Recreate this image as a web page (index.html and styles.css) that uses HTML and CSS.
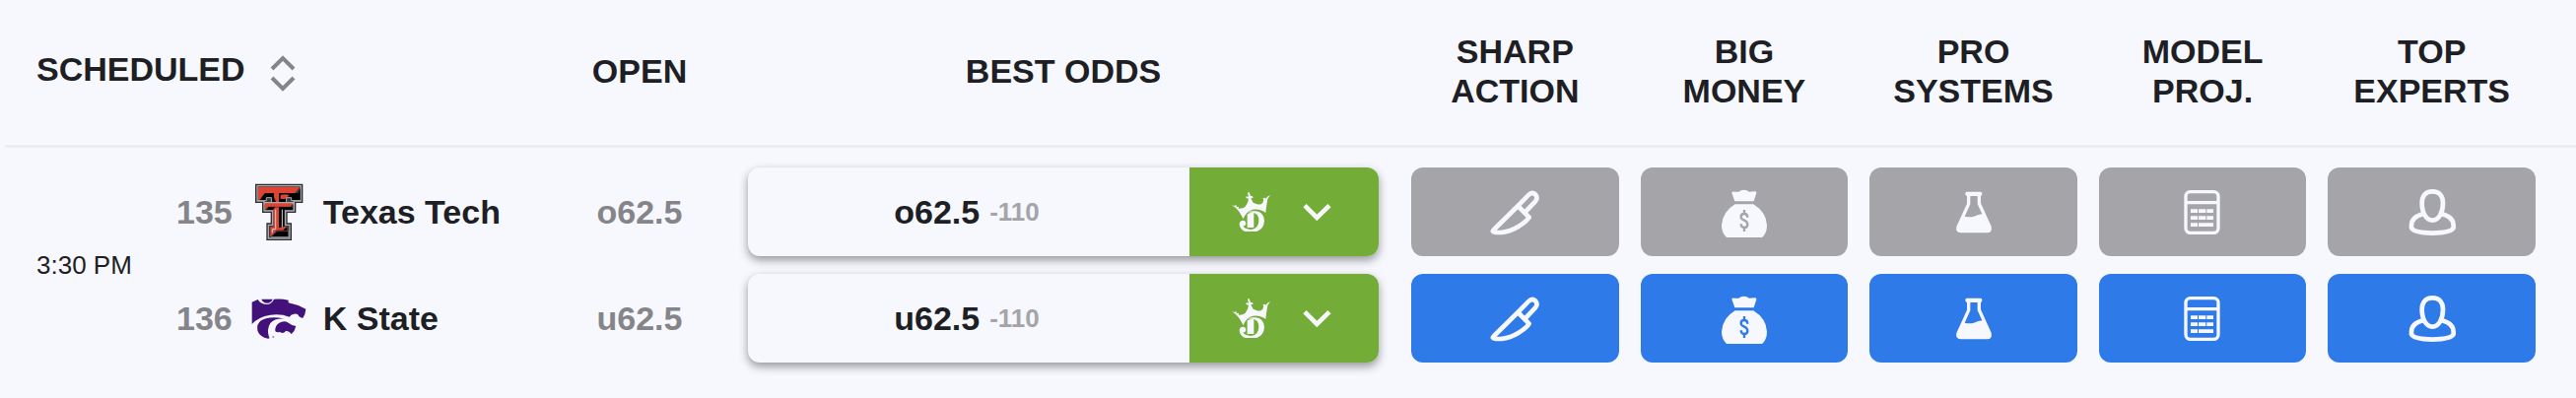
FILE: index.html
```html
<!DOCTYPE html>
<html lang="en">
<head>
<meta charset="utf-8">
<meta name="viewport" content="width=device-width, initial-scale=1">
<title>Best Odds</title>
<link rel="stylesheet" href="styles.css">
</head>
<body>
<svg class="sprite" aria-hidden="true">
  <symbol id="knife" viewBox="51 15 180 180">
    <path class="line" d="M152 86 L183 54 Q194 43 204 52 Q213 62 204 73 L175 104 M151 87 L185 122 Q178 134 152 150 Q126 166 98 168 L84 168 Q69 166 78 159 Z"/>
  </symbol>
  <symbol id="bag" viewBox="59 15 180 180">
    <path class="solid" d="M111 47 Q112 43 118 44 L132 44 Q139 38 148 38 Q157 38 164 44 L180 43 Q187 43 186 48 L178 73 L120 73 Z"/>
    <path class="solid" d="M121 82 L177 82 Q216 106 218 146 Q218 170 203 183 L95 183 Q80 168 80 146 Q83 104 121 82 Z"/>
    <path class="cut" d="M159 122 Q159 111 149 111 Q139 111 139 120 Q139 127 149 131 Q159 135 159 144 Q159 153 149 153 Q139 153 139 142 M149 99 V111 M149 153 V165"/>
  </symbol>
  <symbol id="flask" viewBox="66 15 180 180">
    <path class="solid" fill-rule="evenodd" d="M134 44 H177 Q181 44 181 50 Q181 56 177 57 V79 L209 149 Q213 168 196 169 H116 Q99 168 103 150 L135 80 V57 Q130 56 130 50 Q130 44 134 44 Z M145 57 V82 L128 119 Q141 123 156 119 Q170 113 181 112 L167 81 V57 Z"/>
  </symbol>
  <symbol id="calc" viewBox="765 15 180 180">
    <rect class="line calc-line" x="804" y="44" width="99" height="125" rx="14"/>
    <path class="line calc-line" d="M804 77 H903"/>
    <path class="solid" d="M819 97h21v11h-21z M843 97h22v11h-22z M868 97h20v11h-20z M819 118h21v11h-21z M843 118h22v11h-22z M868 118h20v11h-20z M819 139h21v11h-21z M843 139h45v11h-45z"/>
  </symbol>
  <symbol id="person" viewBox="52 15 180 180">
    <path class="line person-line" d="M143 43 C121 43 111 58 111 78 C111 107 123 131 143 131 C163 131 175 107 175 78 C175 58 165 43 143 43 Z"/>
    <path class="line person-line" d="M114 112 Q79 121 79 147 V154 Q86 169 143 170 Q200 169 207 154 V147 Q207 121 172 112"/>
  </symbol>
  <symbol id="crown" viewBox="150 105 120 120">
    <path class="solid" d="M188 187 L176 166 L165 153 L153 145 L162 147 L166 143 L168 151 L175 149 L173 155 Q187 156 194 149 L201 137 L204 125 L196 123 L197 118 L204 119 L201 107 L206 105 L210 117 L216 117 L218 122 L211 124 L218 137 L230 142 Q241 145 247 137 L250 128 L247 124 L253 122 L257 125 L261 119 L270 114 L262 126 L258 151 L256 168 Q240 155 217 158 Q196 163 188 187 Z"/>
    <path class="solid" d="M200 172 Q205 168 220 167 V213 H200 Z"/>
    <path class="solid" fill-rule="evenodd" d="M202 166 Q212 161 226 163 Q252 167 252 193 Q250 226 212 228 Q179 227 176 203 Q177 191 187 191 Q196 192 196 202 Q194 210 187 208 Q191 218 211 219 Q235 216 235 191 Q235 169 215 167 Q208 167 202 166 Z"/>
  </symbol>
  <symbol id="chevron" viewBox="357 105 120 120">
    <path class="line chevron-line" d="M378 146 L415 183 L453 146"/>
  </symbol>
</svg>

<main class="board">
<table class="odds">
  <colgroup>
    <col class="col-time"><col class="col-team"><col class="col-open"><col class="col-best">
    <col><col><col><col><col>
    <col class="col-end">
  </colgroup>
  <thead>
    <tr>
      <th colspan="2" scope="colgroup" class="scheduled">
        <button type="button" class="sort">Scheduled
          <svg class="sort-icon" viewBox="0 0 28 44" aria-hidden="true"><path d="M3 20 L14 9 L25 20 M3 29 L14 40 L25 29"/></svg>
        </button>
      </th>
      <th scope="col">Open</th>
      <th scope="col">Best Odds</th>
      <th scope="col">Sharp<br>Action</th>
      <th scope="col">Big<br>Money</th>
      <th scope="col">Pro<br>Systems</th>
      <th scope="col">Model<br>Proj.</th>
      <th scope="col">Top<br>Experts</th>
      <td></td>
    </tr>
  </thead>
  <tbody>
    <tr class="away">
      <td rowspan="2" class="time">3:30 PM</td>
      <td class="team-cell">
        <div class="team">
          <span class="number">135</span>
          <svg class="logo" viewBox="36 45 180 180" aria-hidden="true">
            <path fill="#2c2c30" d="M57 50 H202 V108 H181 V138 H155 V169 H168 V222 H91 V169 H104 V138 H78 V108 H57 Z"/>
            <path fill="#a9abae" d="M61 54 H198 V104 H177 V134 H151 V173 H164 V218 H95 V173 H108 V134 H82 V104 H61 Z"/>
            <path fill="#39393d" d="M65 58 H194 V100 H173 V130 H147 V177 H160 V214 H99 V177 H112 V130 H86 V100 H65 Z"/>
            <path fill="#000" d="M78 78 H188 L194 64 V99 H166 V91 H150 V106 H109 V91 H92 V100 H70 Z"/>
            <path fill="#dd4433" d="M66 59 H193 L178 78 H86 L71 98 H66 Z"/>
            <path fill="#dd4433" d="M114 78 H129 V107 H121 L114 91 Z M150 82 L161 84 L148 96 H134 V83 Z"/>
            <path fill="none" stroke="#a9abae" stroke-width="3" d="M65 101 H91 V92 H106 V107 M193 101 H167 V92 H152 V107"/>
            <path fill="#a9abae" d="M83 105 H176 V112 H83 Z"/>
            <path fill="#dd4433" d="M86 109 H171 L164 119 H97 L87 128 Z"/>
            <path fill="#000" d="M97 121 H170 V129 H145 V184 H153 V192 H127 V129 H92 Z"/>
            <path fill="#dd4433" d="M112 127 L118 121 H129 V184 L145 180 L153 180 L142 191 H122 L103 212 V181 H113 Z"/>
            <path fill="none" stroke="#d5d5d5" stroke-width="3" d="M119 128 V188 H109 V199 M139 128 V182"/>
            <path fill="#000" d="M124 196 H157 V210 H108 Z"/>
            <path fill="none" stroke="#a9abae" stroke-width="2" d="M106 212 H159 V192"/>
          </svg>
          <span class="name">Texas Tech</span>
        </div>
      </td>
      <td class="open">o62.5</td>
      <td class="best-cell">
        <div class="best">
          <button type="button" class="line-pick">o62.5 <span class="price">-110</span></button>
          <button type="button" class="book" aria-label="Choose sportsbook"><svg class="icon-small"><use href="#crown"/></svg><svg class="icon-small"><use href="#chevron"/></svg></button>
        </div>
      </td>
      <td><button type="button" class="signal" aria-label="Sharp action, over"><svg class="icon"><use href="#knife"/></svg></button></td>
      <td><button type="button" class="signal" aria-label="Big money, over"><svg class="icon"><use href="#bag"/></svg></button></td>
      <td><button type="button" class="signal" aria-label="Pro systems, over"><svg class="icon"><use href="#flask"/></svg></button></td>
      <td><button type="button" class="signal" aria-label="Model projections, over"><svg class="icon"><use href="#calc"/></svg></button></td>
      <td><button type="button" class="signal" aria-label="Top experts, over"><svg class="icon"><use href="#person"/></svg></button></td>
      <td></td>
    </tr>
    <tr class="home">
      <td class="team-cell">
        <div class="team">
          <span class="number">136</span>
          <svg class="logo" viewBox="36 369 180 180" aria-hidden="true">
            <path fill="#43117a" d="M47 410 L65 402 Q72 416 91 417 Q108 416 114 401 Q137 399 158 404 V412 Q188 418 211 431 Q210 447 202 458 Q196 459 190 453 Q187 444 175 446 Q165 447 161 455 Q135 445 103 449 Q66 455 47 477 Z"/>
            <path fill="#43117a" d="M76 401 H110 Q106 412 93 413 Q80 412 76 401 Z"/>
            <path fill="#43117a" d="M146 461 Q118 458 103 474 Q91 493 99 517 Q103 521 96 521 Q71 516 64 497 Q60 477 75 466 Q102 450 146 461 Z"/>
            <path fill="#43117a" d="M153 470 Q166 480 181 483 Q178 498 167 507 Q158 496 149 499 Q143 508 132 501 Q123 503 118 499 Q117 481 129 474 Q140 467 153 470 Z"/>
            <circle cx="112" cy="516" r="3" fill="#43117a" opacity=".5"/>
          </svg>
          <span class="name">K State</span>
        </div>
      </td>
      <td class="open">u62.5</td>
      <td class="best-cell">
        <div class="best">
          <button type="button" class="line-pick">u62.5 <span class="price">-110</span></button>
          <button type="button" class="book" aria-label="Choose sportsbook"><svg class="icon-small"><use href="#crown"/></svg><svg class="icon-small"><use href="#chevron"/></svg></button>
        </div>
      </td>
      <td><button type="button" class="signal active" aria-label="Sharp action, under"><svg class="icon"><use href="#knife"/></svg></button></td>
      <td><button type="button" class="signal active" aria-label="Big money, under"><svg class="icon"><use href="#bag"/></svg></button></td>
      <td><button type="button" class="signal active" aria-label="Pro systems, under"><svg class="icon"><use href="#flask"/></svg></button></td>
      <td><button type="button" class="signal active" aria-label="Model projections, under"><svg class="icon"><use href="#calc"/></svg></button></td>
      <td><button type="button" class="signal active" aria-label="Top experts, under"><svg class="icon"><use href="#person"/></svg></button></td>
      <td></td>
    </tr>
  </tbody>
</table>
</main>
</body>
</html>
```

FILE: styles.css
```css
:root {
  --bg: #f7f8fe;
  --ink: #1e1f24;
  --muted: #858589;
  --idle: #a5a4a9;
  --blue: #2f7ae9;
  --green: #73ac36;
  --rule: #ecedf2;
}

* {
  box-sizing: border-box;
}

body {
  margin: 0;
  background: var(--bg);
  color: var(--ink);
  font: bold 34px/40px "Liberation Sans", Arial, sans-serif;
}

button {
  margin: 0;
  padding: 0;
  border: 0;
  background: none;
  color: inherit;
  font: inherit;
  cursor: pointer;
}

.sprite {
  position: absolute;
  width: 0;
  height: 0;
}

.board {
  padding-left: 5px;
}

.odds {
  width: 100%;
  table-layout: fixed;
  border-collapse: separate;
  border-spacing: 0;
}

.col-time { width: 140px; }
.col-team { width: 416px; }
.col-open { width: 176px; }
.col-best { width: 684px; }
.col-end { width: 30px; }

th,
td {
  padding: 0 11px;
}

thead th,
thead td {
  height: 150px;
  padding-bottom: 4px;
  border-bottom: 3px solid var(--rule);
  text-align: center;
  text-transform: uppercase;
}

thead .scheduled {
  padding-left: 32px;
  text-align: left;
}

.sort {
  display: flex;
  align-items: flex-start;
  gap: 24px;
  text-transform: inherit;
}

.sort-icon {
  width: 28px;
  height: 44px;
  fill: none;
  stroke: var(--muted);
  stroke-width: 4;
}

.away td {
  padding-top: 20px;
  padding-bottom: 9px;
}

.home td {
  padding-top: 9px;
  padding-bottom: 20px;
}

.away .time {
  padding: 0 0 0 32px;
  font-size: 26px;
  font-weight: normal;
  white-space: nowrap;
}

tbody .team-cell {
  padding-left: 34px;
}

.team {
  display: flex;
  align-items: center;
  gap: 16px;
}

.number,
.open {
  color: var(--muted);
}

.logo {
  flex: none;
  width: 60px;
  height: 60px;
}

.name {
  white-space: nowrap;
}

.open {
  text-align: center;
}

tbody .best-cell {
  padding-left: 22px;
  padding-right: 22px;
}

.best {
  display: flex;
  height: 90px;
  overflow: hidden;
  border-radius: 12px;
  background: var(--bg);
  box-shadow: 0 4px 10px rgba(0, 0, 0, 0.4);
}

.line-pick {
  display: flex;
  flex: 1;
  align-items: center;
  justify-content: center;
  gap: 10px;
  padding-right: 4px;
}

.price {
  color: var(--idle);
  font-size: 26px;
}

.book {
  display: flex;
  flex: none;
  align-items: center;
  justify-content: center;
  gap: 28px;
  width: 192px;
  background: var(--green);
}

.icon-small {
  width: 40px;
  height: 40px;
}

.signal {
  display: flex;
  align-items: center;
  justify-content: center;
  width: 100%;
  height: 90px;
  border-radius: 12px;
  background: var(--idle);
  color: var(--idle);
}

.signal.active {
  background: var(--blue);
  color: var(--blue);
}

.icon {
  width: 60px;
  height: 60px;
}

.solid {
  fill: var(--bg);
}

.line {
  fill: none;
  stroke: var(--bg);
  stroke-width: 14;
  stroke-linejoin: round;
}

.calc-line { stroke-width: 10; }
.person-line { stroke-width: 14; }

.chevron-line {
  stroke-width: 14;
  stroke-linejoin: miter;
}

.cut {
  fill: none;
  stroke: currentColor;
  stroke-width: 7;
}
```
